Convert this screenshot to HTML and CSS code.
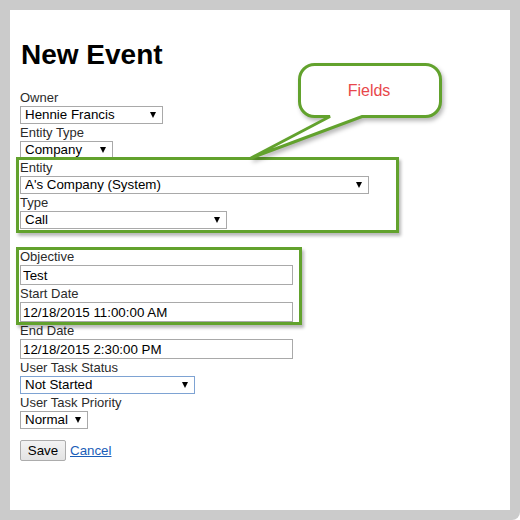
FILE: index.html
```html
<!DOCTYPE html>
<html lang="en">
<head>
<meta charset="utf-8">
<title>New Event</title>
<link rel="stylesheet" href="styles.css">
</head>
<body>
<div class="frame">
  <main class="panel">
    <h1 class="title">New Event</h1>
    <form class="form">
      <label class="label" for="owner">Owner</label>
      <span class="select w-owner"><select id="owner"><option>Hennie Francis</option></select></span>

      <label class="label" for="entity-type">Entity Type</label>
      <span class="select w-company"><select id="entity-type"><option>Company</option></select></span>

      <div class="group group-entity">
        <label class="label" for="entity">Entity</label>
        <span class="select w-entity"><select id="entity"><option>A's Company (System)</option></select></span>

        <label class="label" for="type">Type</label>
        <span class="select w-type"><select id="type"><option>Call</option></select></span>
      </div>

      <div class="group group-dates">
        <label class="label" for="objective">Objective</label>
        <input class="text" id="objective" type="text" value="Test">

        <label class="label" for="start">Start Date</label>
        <input class="text" id="start" type="text" value="12/18/2015 11:00:00 AM">
      </div>

      <label class="label" for="end">End Date</label>
      <input class="text" id="end" type="text" value="12/18/2015 2:30:00 PM">

      <label class="label" for="status">User Task Status</label>
      <span class="select w-status is-focused"><select id="status"><option>Not Started</option></select></span>

      <label class="label" for="priority">User Task Priority</label>
      <span class="select w-priority"><select id="priority"><option>Normal</option></select></span>

      <div class="actions">
        <button class="btn" type="button">Save</button>
        <a class="link" href="#">Cancel</a>
      </div>
    </form>
  </main>

  <svg class="callout" width="520" height="520" viewBox="0 0 520 520" aria-label="Fields">
    <path class="callout-shape"
      d="M314.5,64.5 H425.5 A15,15 0 0 1 440.5,79.5 V101.5 A15,15 0 0 1 425.5,116.5 H362 L251,158 L330,116.5 H314.5 A15,15 0 0 1 299.5,101.5 V79.5 A15,15 0 0 1 314.5,64.5 Z"/>
    <text class="callout-text" x="369" y="96" text-anchor="middle">Fields</text>
  </svg>
</div>
</body>
</html>
```

FILE: styles.css
```css
html, body {
  margin: 0;
  padding: 0;
  background: #ffffff;
}

.frame {
  position: relative;
  width: 520px;
  height: 520px;
  box-sizing: border-box;
  padding: 10px;
  background: #cbcbcb;
  border-bottom-right-radius: 8px;
}

.panel {
  height: 500px;
  box-sizing: border-box;
  padding: 29px 10px 0 10px;
  background: #ffffff;
  font-family: "Liberation Sans", Arial, sans-serif;
  color: #222;
}

.title {
  margin: 0 0 18px 1px;
  font-size: 28px;
  line-height: 32px;
  font-weight: bold;
  color: #000;
}

.form {
  display: flex;
  flex-direction: column;
  align-items: flex-start;
  margin: 0;
}

.label {
  display: block;
  font-size: 13px;
  line-height: 17px;
  height: 17px;
  color: #2b2b2b;
}

/* select boxes with a drawn arrow */
.select {
  position: relative;
  display: block;
  height: 18px;
}

.select select {
  appearance: none;
  -webkit-appearance: none;
  display: block;
  width: 100%;
  height: 18px;
  box-sizing: border-box;
  margin: 0;
  padding: 0 0 0 4px;
  border: 1px solid #a9a9a9;
  border-radius: 0;
  background: #fff;
  font-family: "Liberation Sans", Arial, sans-serif;
  font-size: 13.33px;
  line-height: 16px;
  color: #000;
}

.select::after {
  content: "";
  position: absolute;
  right: 7px;
  top: 6px;
  width: 0;
  height: 0;
  border-left: 3px solid transparent;
  border-right: 3px solid transparent;
  border-top: 6px solid #000;
  pointer-events: none;
}

.select.is-focused select {
  border-color: #7ea3d3;
}

.w-owner { width: 143px; }
.w-company { width: 93px; }
.w-entity { width: 349px; }
.w-type { width: 207px; }
.w-status { width: 175px; }
.w-priority { width: 68px; }

.text {
  display: block;
  width: 273px;
  height: 20px;
  box-sizing: border-box;
  margin: 0;
  padding: 0 2px;
  border: 1px solid #a9a9a9;
  background: #fff;
  font-family: "Liberation Sans", Arial, sans-serif;
  font-size: 13.33px;
  color: #000;
}

/* highlighted field groups */
.group {
  position: relative;
  display: flex;
  flex-direction: column;
  align-items: flex-start;
}

.group::before {
  content: "";
  position: absolute;
  left: -4px;
  border: 3px solid #62a22d;
  box-shadow: 2px 3px 3px rgba(0, 0, 0, 0.28);
  pointer-events: none;
}

.group-entity::before {
  top: -2px;
  bottom: -4px;
  width: 377px;
}

.group-dates {
  margin-top: 19px;
}

.group-dates::before {
  top: -1px;
  bottom: -3px;
  width: 280px;
}

.actions {
  display: flex;
  align-items: center;
  gap: 4px;
  margin-top: 11px;
}

.btn {
  width: 46px;
  height: 21px;
  padding: 0;
  margin: 0;
  border: 1px solid #acacac;
  border-radius: 2px;
  background: linear-gradient(#f3f3f3, #e3e3e3);
  font-family: "Liberation Sans", Arial, sans-serif;
  font-size: 13.33px;
  color: #000;
}

.link {
  font-size: 13.33px;
  color: #1a5db8;
  text-decoration: underline;
}

/* speech bubble pointing at the entity group */
.callout {
  position: absolute;
  left: 0;
  top: 0;
  pointer-events: none;
}

.callout-shape {
  fill: #ffffff;
  stroke: #62a22d;
  stroke-width: 3;
  stroke-linejoin: miter;
  stroke-miterlimit: 4;
  filter: drop-shadow(2px 3px 2px rgba(0, 0, 0, 0.28));
}

.callout-text {
  font-family: "Liberation Sans", Arial, sans-serif;
  font-size: 16px;
  fill: #e8474b;
}
```
